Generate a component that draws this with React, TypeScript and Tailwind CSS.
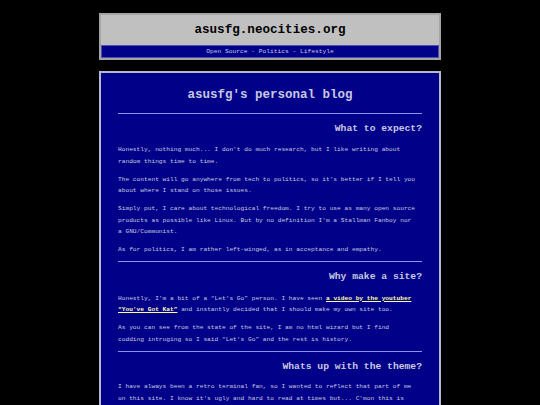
export default function App() {
  return (
    <div className="min-h-screen bg-black pt-[13px] pb-6 font-['Liberation_Mono','DejaVu_Sans_Mono',monospace]">
      <header className="mx-auto w-[342px] border-2 border-[#a4a4a4] bg-[#c0c0c0]">
        <h1 className="h-[30px] pt-px flex items-center justify-center text-[12.6px] font-bold text-black">
          asusfg.neocities.org
        </h1>
        <nav className="h-[13px] flex items-center justify-center border border-[#5050b0] bg-[#000088] text-[6.25px] text-[#c8c8e8]">
          Open Source - Politics - Lifestyle
        </nav>
      </header>

      <main className="mx-auto mt-[11px] w-[342px] border-2 border-[#b8b8cc] bg-[#000088] px-[17px] pt-[14px] pb-6 text-[#c8c8e0]">
        <h2 className="text-center text-[12.5px] leading-[16px] font-bold">asusfg's personal blog</h2>
        <hr className="mt-[10px] border-0 border-t border-[#9090f0]" />

        <h3 className="mt-[9px] text-right text-[9.7px] leading-[12px] font-bold">What to expect?</h3>
        <div className="mt-[9px] pr-[4px] flex flex-col gap-[6.5px] text-[6.2px] leading-[11.5px]">
          <p>Honestly, nothing much... I don't do much research, but I like writing about random things time to time.</p>
          <p>The content will go anywhere from tech to politics, so it's better if I tell you about where I stand on those issues.</p>
          <p>Simply put, I care about technological freedom. I try to use as many open source products as possible like Linux. But by no definition I'm a Stallman Fanboy nor a GNU/Communist.</p>
          <p>As for politics, I am rather left-winged, as in acceptance and empathy.</p>
        </div>
        <hr className="mt-[5px] border-0 border-t border-[#9090f0]" />

        <h3 className="mt-[9px] text-right text-[9.7px] leading-[12px] font-bold">Why make a site?</h3>
        <div className="mt-[10px] pr-[4px] flex flex-col gap-[6.5px] text-[6.2px] leading-[11.5px]">
          <p>
            Honestly, I'm a bit of a “Let's Go” person. I have seen{' '}
            <a href="#" className="font-bold text-[#ffffa8] underline">a video by the youtuber “You've Got Kat”</a>{' '}
            and instantly decided that I should make my own site too.
          </p>
          <p>As you can see from the state of the site, I am no html wizard but I find codding intruging so I said “Let's Go” and the rest is history.</p>
        </div>
        <hr className="mt-[6px] border-0 border-t border-[#9090f0]" />

        <h3 className="mt-[9px] text-right text-[9.7px] leading-[12px] font-bold">Whats up with the theme?</h3>
        <div className="mt-[8px] pr-[4px] flex flex-col gap-[6.5px] text-[6.2px] leading-[11.5px]">
          <p>I have always been a retro terminal fan, so I wanted to reflect that part of me on this site. I know it's ugly and hard to read at times but... C'mon this is the internet, it's supposed to be a little weird.</p>
        </div>
      </main>
    </div>
  )
}
